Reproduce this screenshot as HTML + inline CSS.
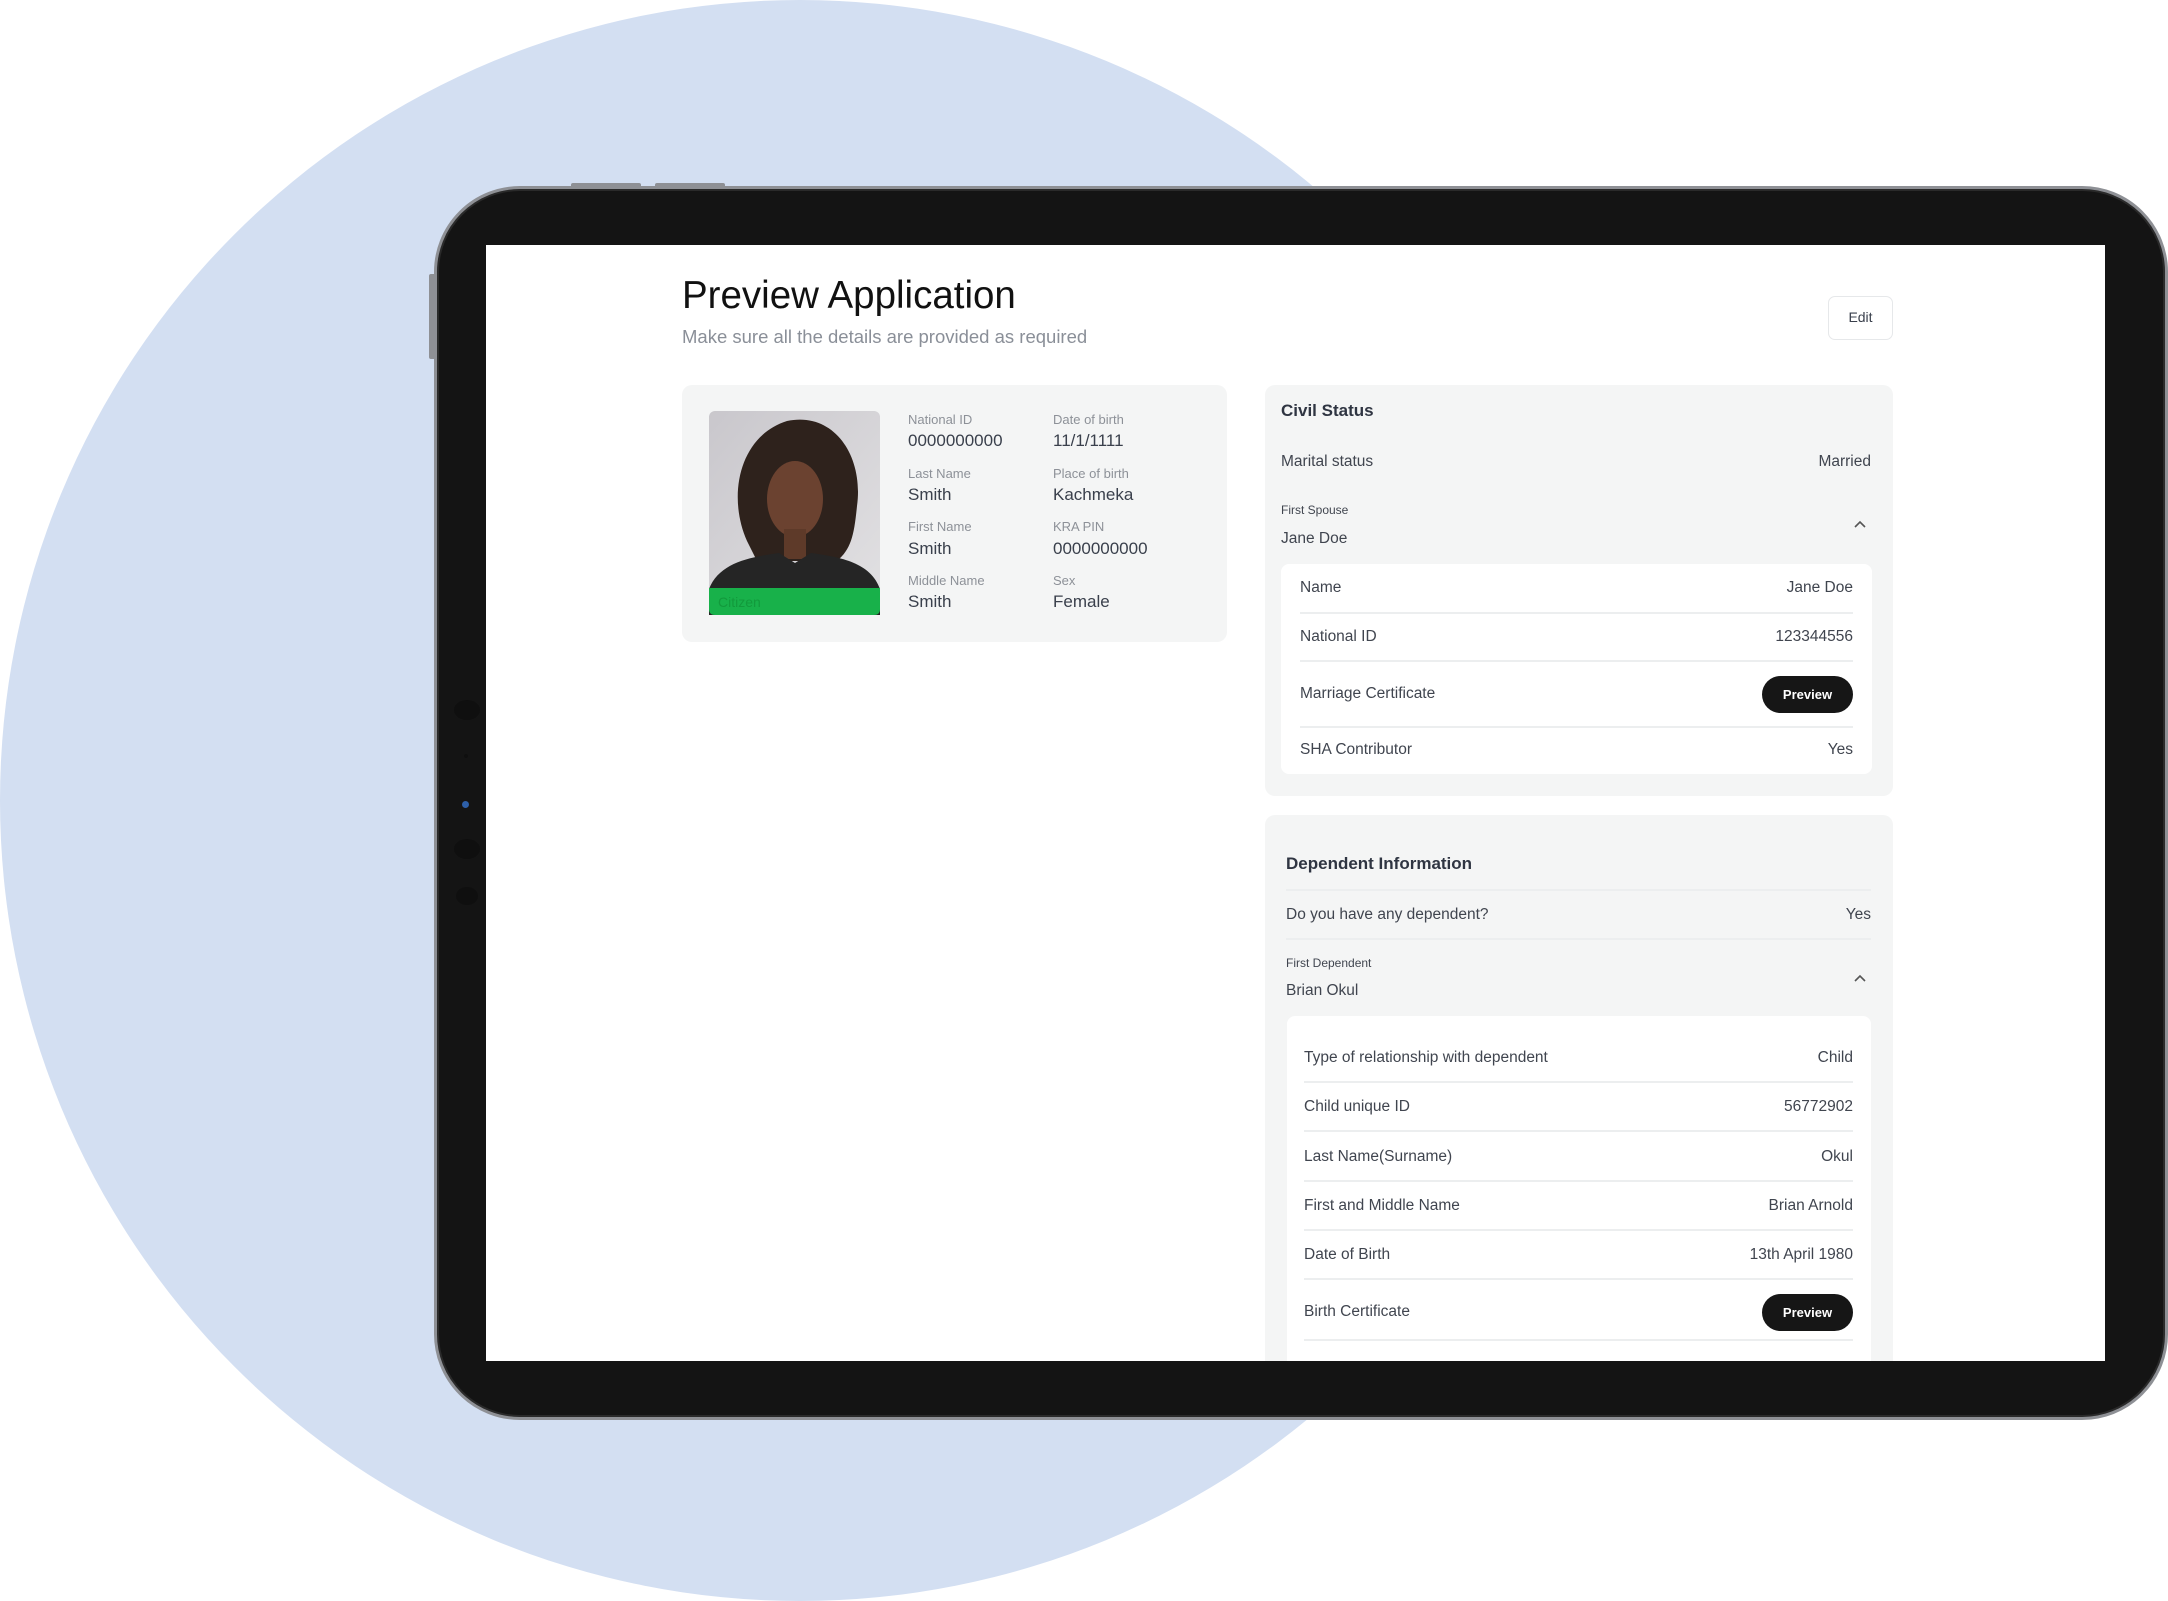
<!DOCTYPE html>
<html><head><meta charset="utf-8"><style>
*{margin:0;padding:0;box-sizing:border-box}
body{width:2168px;height:1601px;background:#fff;position:relative;overflow:hidden;font-family:"Liberation Sans",sans-serif;color:#3d4350}
.a{position:absolute;white-space:nowrap}
.circle{left:0;top:0;width:1600px;height:1601px;border-radius:50%;background:#d3dff2}
.frame{left:434px;top:186px;width:1734px;height:1234px;border-radius:86px;background:#141414;border:3px solid #8e9095;box-shadow:inset 0 0 0 2px #2a2a2a}
.screen{left:486px;top:245px;width:1619px;height:1116px;background:#fff;overflow:hidden}
.card{background:#f4f5f5;border-radius:10px}
.lbl{font-size:13px;color:#8d9198}
.val{font-size:17px;color:#3a404c}
.row{font-size:15.5px;color:#40454f}
.line{height:2px;background:#eceeef}
.btn{background:#161616;color:#fff;border-radius:20px;font-size:13px;text-align:center;font-weight:bold}
.dot{background:#0f0f0f;border-radius:50%}
</style></head><body>
<div class="a circle"></div>
<div class="a" style="left:571px;top:183px;width:70px;height:6px;background:#8e9095;border-radius:2px"></div>
<div class="a" style="left:655px;top:183px;width:70px;height:6px;background:#8e9095;border-radius:2px"></div>
<div class="a" style="left:429px;top:274px;width:8px;height:85px;background:#8e9095;border-radius:2px"></div>
<div class="a frame"></div>
<div class="a dot" style="left:454px;top:700px;width:26px;height:20px"></div>
<div class="a dot" style="left:464px;top:754px;width:4px;height:4px"></div>
<div class="a" style="left:462px;top:801px;width:7px;height:7px;border-radius:50%;background:#2d5fa8"></div>
<div class="a dot" style="left:454px;top:839px;width:26px;height:20px"></div>
<div class="a dot" style="left:456px;top:887px;width:22px;height:18px"></div>
<div class="a screen">
 <div class="a" style="left:196px;top:29px;font-size:38.5px;color:#111">Preview Application</div>
 <div class="a" style="left:196px;top:81px;font-size:18.5px;color:#8a8f98">Make sure all the details are provided as required</div>
 <div class="a" style="left:1342px;top:51px;width:65px;height:44px;border:1.5px solid #e6e8ea;border-radius:7px;font-size:14px;color:#3a404c;text-align:center;line-height:41px">Edit</div>

 <div class="a card" style="left:196px;top:140px;width:545px;height:257px"></div>
 <svg class="a" style="left:223px;top:166px" width="171" height="204" viewBox="0 0 171 204">
  <defs><linearGradient id="bg" x1="0" y1="0" x2="1" y2="1"><stop offset="0" stop-color="#c9c7cc"/><stop offset="1" stop-color="#e2e1e3"/></linearGradient></defs>
  <rect width="171" height="204" rx="6" fill="url(#bg)"/>
  <path d="M38 130 C18 85 30 25 78 10 C125 0 155 45 148 95 C145 125 142 138 128 150 L48 150 Z" fill="#2e221c"/>
  <ellipse cx="86" cy="88" rx="28" ry="38" fill="#6b4230"/>
  <rect x="75" y="118" width="22" height="30" fill="#5e3a29"/>
  <path d="M0 204 L0 178 C10 152 40 146 70 142 L86 152 L102 142 C132 146 162 152 171 178 L171 204 Z" fill="#252525"/>
  <path d="M0 177 H171 V198 Q171 204 165 204 H6 Q0 204 0 198 Z" fill="#18b14a"/>
  <text x="9" y="196" font-family="Liberation Sans, sans-serif" font-size="14" fill="#129a3c">Citizen</text>
 </svg>
 <div class="a lbl" style="left:422px;top:167px">National ID</div>
 <div class="a val" style="left:422px;top:186px">0000000000</div>
 <div class="a lbl" style="left:422px;top:221px">Last Name</div>
 <div class="a val" style="left:422px;top:240px">Smith</div>
 <div class="a lbl" style="left:422px;top:274px">First Name</div>
 <div class="a val" style="left:422px;top:294px">Smith</div>
 <div class="a lbl" style="left:422px;top:328px">Middle Name</div>
 <div class="a val" style="left:422px;top:347px">Smith</div>
 <div class="a lbl" style="left:567px;top:167px">Date of birth</div>
 <div class="a val" style="left:567px;top:186px">11/1/1111</div>
 <div class="a lbl" style="left:567px;top:221px">Place of birth</div>
 <div class="a val" style="left:567px;top:240px">Kachmeka</div>
 <div class="a lbl" style="left:567px;top:274px">KRA PIN</div>
 <div class="a val" style="left:567px;top:294px">0000000000</div>
 <div class="a lbl" style="left:567px;top:328px">Sex</div>
 <div class="a val" style="left:567px;top:347px">Female</div>

 <div class="a card" style="left:779px;top:140px;width:628px;height:411px"></div>
 <div class="a" style="left:795px;top:156px;font-size:17px;font-weight:bold;color:#2f3542">Civil Status</div>
 <div class="a row" style="left:795px;top:208px">Marital status</div>
 <div class="a row" style="left:1305px;top:208px;width:80px;text-align:right">Married</div>
 <div class="a" style="left:795px;top:258px;font-size:12px;color:#40454f">First Spouse</div>
 <div class="a row" style="left:795px;top:285px">Jane Doe</div>
 <svg class="a" style="left:1368px;top:275px" width="12" height="8"><path d="M1 7 L6 2 L11 7" fill="none" stroke="#555" stroke-width="1.6"/></svg>
 <div class="a" style="left:795px;top:319px;width:591px;height:210px;background:#fff;border-radius:8px"></div>
 <div class="a row" style="left:814px;top:334px">Name</div>
 <div class="a row" style="left:1267px;top:334px;width:100px;text-align:right">Jane Doe</div>
 <div class="a line" style="left:814px;top:367px;width:553px"></div>
 <div class="a row" style="left:814px;top:383px">National ID</div>
 <div class="a row" style="left:1267px;top:383px;width:100px;text-align:right">123344556</div>
 <div class="a line" style="left:814px;top:415px;width:553px"></div>
 <div class="a row" style="left:814px;top:440px">Marriage Certificate</div>
 <div class="a btn" style="left:1276px;top:431px;width:91px;height:37px;line-height:37px">Preview</div>
 <div class="a line" style="left:814px;top:481px;width:553px"></div>
 <div class="a row" style="left:814px;top:496px">SHA Contributor</div>
 <div class="a row" style="left:1267px;top:496px;width:100px;text-align:right">Yes</div>

 <div class="a card" style="left:779px;top:570px;width:628px;height:600px"></div>
 <div class="a" style="left:800px;top:609px;font-size:17px;font-weight:bold;color:#2f3542">Dependent Information</div>
 <div class="a line" style="left:800px;top:644px;width:585px"></div>
 <div class="a row" style="left:800px;top:661px">Do you have any dependent?</div>
 <div class="a row" style="left:1285px;top:661px;width:100px;text-align:right">Yes</div>
 <div class="a line" style="left:800px;top:693px;width:585px"></div>
 <div class="a" style="left:800px;top:711px;font-size:12px;color:#40454f">First Dependent</div>
 <div class="a row" style="left:800px;top:737px">Brian Okul</div>
 <svg class="a" style="left:1368px;top:729px" width="12" height="8"><path d="M1 7 L6 2 L11 7" fill="none" stroke="#555" stroke-width="1.6"/></svg>
 <div class="a" style="left:801px;top:771px;width:584px;height:400px;background:#fff;border-radius:8px"></div>
 <div class="a row" style="left:818px;top:804px">Type of relationship with dependent</div>
 <div class="a row" style="left:1217px;top:804px;width:150px;text-align:right">Child</div>
 <div class="a line" style="left:818px;top:836px;width:549px"></div>
 <div class="a row" style="left:818px;top:853px">Child unique ID</div>
 <div class="a row" style="left:1217px;top:853px;width:150px;text-align:right">56772902</div>
 <div class="a line" style="left:818px;top:885px;width:549px"></div>
 <div class="a row" style="left:818px;top:903px">Last Name(Surname)</div>
 <div class="a row" style="left:1217px;top:903px;width:150px;text-align:right">Okul</div>
 <div class="a line" style="left:818px;top:935px;width:549px"></div>
 <div class="a row" style="left:818px;top:952px">First and Middle Name</div>
 <div class="a row" style="left:1217px;top:952px;width:150px;text-align:right">Brian Arnold</div>
 <div class="a line" style="left:818px;top:984px;width:549px"></div>
 <div class="a row" style="left:818px;top:1001px">Date of Birth</div>
 <div class="a row" style="left:1217px;top:1001px;width:150px;text-align:right">13th April 1980</div>
 <div class="a line" style="left:818px;top:1033px;width:549px"></div>
 <div class="a row" style="left:818px;top:1058px">Birth Certificate</div>
 <div class="a btn" style="left:1276px;top:1049px;width:91px;height:37px;line-height:37px">Preview</div>
 <div class="a line" style="left:818px;top:1094px;width:549px"></div>
</div>
</body></html>
